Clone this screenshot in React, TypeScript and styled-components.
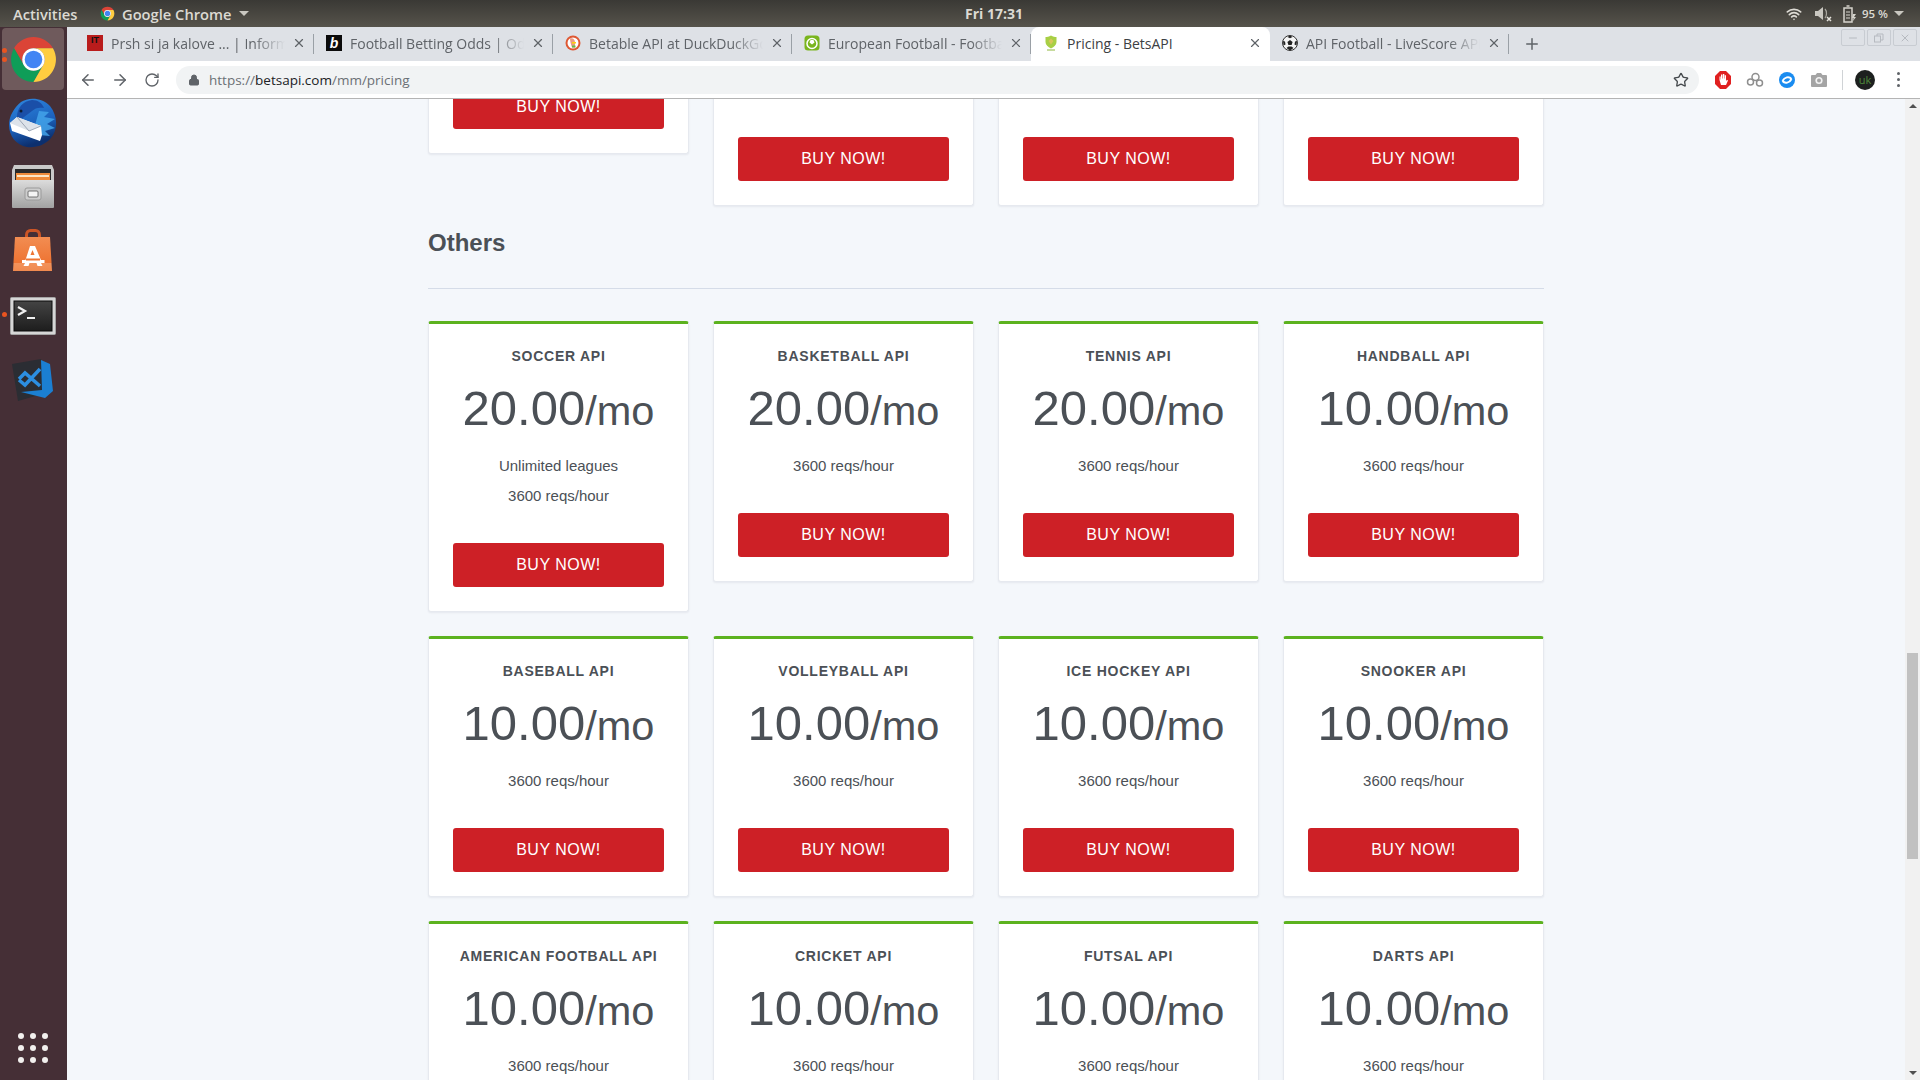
import React from "react";
import styled, { createGlobalStyle } from "styled-components";
import { ArrowLeft, ArrowRight, RotateCw, Lock, Star, Plus, X, Wifi, Minus } from "lucide-react";

const Global = createGlobalStyle`
  html, body { margin: 0; padding: 0; width: 100%; height: 100%; overflow: hidden; }
  * { box-sizing: border-box; }
  #root { width: 1920px; height: 1080px; }
`;

const UI_FONT = `"Open Sans", "Noto Sans", sans-serif`;
const PAGE_FONT = `"Liberation Sans", Arial, sans-serif`;

const Desktop = styled.div`
  width: 1920px;
  height: 1080px;
  display: grid;
  grid-template-rows: 27px 1fr;
  overflow: hidden;
  background: #452f36;
`;

const TopBar = styled.header`
  display: grid;
  grid-template-columns: 952px auto 1fr;
  align-items: center;
  padding: 0 12px 0 13px;
  background: linear-gradient(180deg, #3a3935 0%, #56534b 100%);
  color: #dcdad3;
  font: 600 14.7px ${UI_FONT};
`;

const TopLeft = styled.div`
  display: flex;
  align-items: center;
`;

const Activities = styled.span`
  width: 87px;
`;

const AppName = styled.span`
  margin: 0 7px;
`;

const Clock = styled.span`
  font-size: 14px;
  font-weight: 700;
`;

const TopRight = styled.div`
  display: flex;
  align-items: center;
  justify-content: flex-end;
  padding-right: 4px;
  font-size: 11.5px;
`;

const Tray = styled.span`
  display: flex;
  align-items: center;
  margin-right: ${(p: { $gap: number }) => p.$gap}px;
`;

const Caret = styled.span`
  width: 0;
  height: 0;
  border-left: 5px solid transparent;
  border-right: 5px solid transparent;
  border-top: 5px solid #c9c7c0;
`;

const Workspace = styled.div`
  display: grid;
  grid-template-columns: 67px 1fr;
  min-height: 0;
`;

const Dock = styled.nav`
  display: flex;
  flex-direction: column;
  align-items: center;
  padding: 1px 3px 17px 2px;
  background: #452f36;
`;

const DockTile = styled.div<{ $active?: boolean; $nudge?: number }>`
  position: relative;
  width: 62px;
  height: 62px;
  margin-bottom: 2px;
  padding-top: ${(p) => p.$nudge ?? 0}px;
  border-radius: 4px;
  display: flex;
  align-items: center;
  justify-content: center;
  background: ${(p) => (p.$active ? "#6f5a5c" : "transparent")};
`;

const DockDot = styled.i<{ $top: number }>`
  position: absolute;
  left: 0;
  top: ${(p) => p.$top}px;
  width: 5px;
  height: 5px;
  border-radius: 50%;
  background: #e95420;
`;

const AppGrid = styled.div`
  margin-top: auto;
  display: grid;
  grid-template-columns: repeat(3, 6px);
  gap: 6px;
`;

const AppDot = styled.i`
  width: 6px;
  height: 6px;
  border-radius: 50%;
  background: #f2f0ee;
`;

const Browser = styled.div`
  display: grid;
  grid-template-rows: 34px 38px 1fr;
  min-width: 0;
  min-height: 0;
  background: #fff;
`;

const TabStrip = styled.div`
  display: flex;
  align-items: stretch;
  padding-left: 8px;
  background: #dee1e6;
`;

const Tab = styled.div<{ $active?: boolean }>`
  position: relative;
  width: 239px;
  height: 34px;
  padding: 0 7px 2px 12px;
  display: flex;
  align-items: center;
  border-radius: 8px 8px 0 0;
  background: ${(p) => (p.$active ? "#fff" : "transparent")};
  color: ${(p) => (p.$active ? "#3c4043" : "#5f6368")};
  font: 400 14px ${UI_FONT};
  &::after {
    content: "";
    display: ${(p) => (p.$active ? "none" : "block")};
    position: absolute;
    right: 0;
    top: 7px;
    height: 20px;
    width: 1px;
    background: #9aa0a6;
  }
`;

const Favicon = styled.span`
  flex: none;
  width: 16px;
  height: 16px;
  margin-right: 8px;
  display: flex;
`;

const TabTitle = styled.span<{ $fade?: boolean }>`
  flex: 1;
  min-width: 0;
  overflow: hidden;
  white-space: nowrap;
  mask-image: ${(p) =>
    p.$fade ? "linear-gradient(90deg, #000 82%, transparent 100%)" : "none"};
`;

const TabClose = styled.span`
  flex: none;
  width: 16px;
  margin-left: 6px;
  display: flex;
  justify-content: center;
  color: #5f6368;
`;

const NewTab = styled.span`
  width: 46px;
  display: flex;
  align-items: center;
  justify-content: center;
  color: #5f6368;
`;

const WindowButtons = styled.div`
  margin-left: auto;
  padding: 2px 3px 0 0;
  display: flex;
  gap: 2px;
`;

const WindowButton = styled.span`
  width: 24px;
  height: 17px;
  display: flex;
  align-items: center;
  justify-content: center;
  border: 1px solid #c8ccd2;
  border-radius: 2px;
  color: #b6bac0;
`;

const Toolbar = styled.div`
  display: flex;
  align-items: center;
  padding-left: 5px;
  background: #fff;
  border-bottom: 1px solid #b4b4b4;
`;

const NavButton = styled.span`
  width: 32px;
  display: flex;
  justify-content: center;
  color: #5f6368;
`;

const Omnibox = styled.div`
  width: 1523px;
  height: 28px;
  margin-left: 8px;
  padding: 0 10px 0 12px;
  display: flex;
  align-items: center;
  border-radius: 14px;
  background: #f1f3f4;
  font: 400 13.5px ${UI_FONT};
  color: #6b7075;
`;

const LockSlot = styled.span`
  width: 21px;
  display: flex;
  color: #5f6368;
`;

const UrlHost = styled.span`
  color: #202124;
`;

const StarSlot = styled.span`
  margin-left: auto;
  display: flex;
  color: #45494d;
`;

const ExtSlot = styled.span`
  width: 32px;
  display: flex;
  justify-content: center;
  flex: none;
`;

const ExtRow = styled.div`
  margin-left: 8px;
  display: flex;
  align-items: center;
`;

const ExtDivider = styled.i`
  width: 1px;
  height: 20px;
  margin: 0 12px 0 7px;
  background: #d0d3d6;
`;

const Avatar = styled.span`
  width: 20px;
  height: 20px;
  border-radius: 50%;
  background: #1d201f;
  color: #4e8a3a;
  font: 400 11px ${UI_FONT};
  display: flex;
  align-items: center;
  justify-content: center;
`;

const MenuDots = styled.span`
  margin-left: 22px;
  display: flex;
  flex-direction: column;
  gap: 3px;
  & i {
    width: 3px;
    height: 3px;
    border-radius: 50%;
    background: #5f6368;
  }
`;

const Viewport = styled.div`
  display: grid;
  grid-template-columns: 1fr 15px;
  min-height: 0;
  overflow: hidden;
  background: #f4f7fb;
`;

const Scroller = styled.main`
  overflow: hidden;
  min-width: 0;
`;

const Container = styled.div`
  width: 1116px;
  margin: -30px auto 0;
  font-family: ${PAGE_FONT};
  color: #4b5056;
`;

const CardGrid = styled.section`
  display: grid;
  grid-template-columns: repeat(4, 261px);
  gap: 24px;
  align-items: start;
`;

const Card = styled.article<{ $lead?: number }>`
  padding: ${(p) => (p.$lead !== undefined ? p.$lead : 24)}px 24px 24px;
  background: #fff;
  border: 1px solid #e6e9ef;
  border-top: 3px solid #5cb21f;
  border-radius: 3px;
  box-shadow: 0 1px 2px rgba(60, 70, 90, 0.08);
  text-align: center;
`;

const PlanName = styled.h3`
  margin: 0;
  font-size: 14px;
  line-height: 16px;
  font-weight: 700;
  letter-spacing: 0.75px;
`;

const Price = styled.div`
  margin-top: 15px;
  height: 62px;
  font-size: 49px;
  line-height: 58px;
  white-space: nowrap;
`;

const PriceUnit = styled.span`
  font-size: 41.5px;
`;

const FeatureList = styled.ul`
  list-style: none;
  margin: 10px 0 32px;
  padding: 0;
  font-size: 15px;
  line-height: 30px;
`;

const BuyButton = styled.button`
  display: block;
  width: 100%;
  height: 44px;
  padding: 0;
  border: 0;
  border-radius: 3px;
  background: #cd2026;
  color: #fff;
  font: 400 16px ${PAGE_FONT};
  letter-spacing: 0.5px;
`;

const SectionTitle = styled.h2`
  margin: 23px 0 31px;
  font-size: 24px;
  line-height: 28px;
  font-weight: 700;
`;

const Rule = styled.hr`
  margin: 0 0 32px;
  border: 0;
  height: 1px;
  background: #d5dce8;
`;

const Scrollbar = styled.aside`
  display: flex;
  flex-direction: column;
  align-items: center;
  background: #f1f1f1;
  padding: 5px 0;
`;

const ArrowUp = styled.i`
  width: 0;
  height: 0;
  border-left: 4px solid transparent;
  border-right: 4px solid transparent;
  border-bottom: 4px solid #505050;
`;

const ArrowDown = styled.i`
  width: 0;
  height: 0;
  margin-top: auto;
  border-left: 4px solid transparent;
  border-right: 4px solid transparent;
  border-top: 4px solid #505050;
`;

const Thumb = styled.div`
  width: 11px;
  height: 206px;
  margin-top: 545px;
  background: #c1c1c1;
`;

const ChromeLogo = ({ size }: { size: number }) => (
  <svg width={size} height={size} viewBox="0 0 48 48">
    <path fill="#db4437" d="M43.05 13A22 22 0 0 0 4.95 13L14.47 29.5A11 11 0 0 1 24 13Z" />
    <path fill="#0f9d58" d="M4.95 13A22 22 0 0 0 24 46L33.53 29.5A11 11 0 0 1 14.47 29.5Z" />
    <path fill="#ffcd40" d="M24 46A22 22 0 0 0 43.05 13L24 13A11 11 0 0 1 33.53 29.5Z" />
    <circle cx="24" cy="24" r="11" fill="#fff" />
    <circle cx="24" cy="24" r="8.6" fill="#4285f4" />
  </svg>
);

const Thunderbird = () => (
  <svg width="50" height="50" viewBox="0 0 50 50">
    <defs>
      <linearGradient id="tb" x1="0" y1="0" x2="0.3" y2="1">
        <stop offset="0" stopColor="#2f88e0" />
        <stop offset="0.6" stopColor="#1c62bd" />
        <stop offset="1" stopColor="#0c2f6e" />
      </linearGradient>
    </defs>
    <path fill="url(#tb)" d="M13 4C20-1 34-1 42 8c8 10 8 24 1 32-6 7-15 10-24 9C8 47 1 38 1 27c0-9 5-17 12-23Z" />
    <path fill="#43a3ea" d="M31 13l10 1-5 5 11 2-8 5 8 4-10 3 5 5-11-1-4-10Z" opacity="0.85" />
    <path fill="#1a4fa8" d="M9 19C9 10 15 3 24 2c6 0 10 3 12 8-5-1-9 0-12 3L12 22Z" />
    <circle cx="13" cy="13" r="1.500" fill="#0d1c33" />
    <path fill="#fff" d="M2 25l7-6 24 9 1 9-2 6-28-10Z" />
    <path fill="#dde3ea" d="M9 19l24 9-12 5L2 25Z" />
    <path fill="none" stroke="#8c97a7" strokeWidth="0.800" d="M9 19l12 14 12-5" />
  </svg>
);

const FileCabinet = () => (
  <svg width="42" height="44" viewBox="0 0 42 44">
    <defs>
      <linearGradient id="cab" x1="0" y1="0" x2="0" y2="1">
        <stop offset="0" stopColor="#dcdcdc" />
        <stop offset="1" stopColor="#a2a2a2" />
      </linearGradient>
    </defs>
    <path fill="#c9c9c9" d="M2 0h38l2 5v12H0V5Z" />
    <rect x="3" y="4" width="36" height="13" fill="#2a2a2a" />
    <rect x="4" y="8" width="34" height="8" fill="#ee8b3a" />
    <rect x="5" y="10" width="32" height="2" fill="#fbe5c4" />
    <rect x="0" y="15" width="42" height="28" rx="1" fill="url(#cab)" />
    <rect x="13" y="23" width="16" height="12" rx="2" fill="#cdcdcd" stroke="#9a9a9a" />
    <rect x="16" y="26" width="10" height="6" rx="1" fill="#f4f4f4" stroke="#555" strokeWidth="0.800" />
  </svg>
);

const SoftwareBag = () => (
  <svg width="44" height="44" viewBox="0 0 44 44">
    <defs>
      <linearGradient id="bag" x1="0" y1="0" x2="0" y2="1">
        <stop offset="0" stopColor="#f28d52" />
        <stop offset="0.75" stopColor="#ee7433" />
        <stop offset="0.76" stopColor="#f2935c" />
        <stop offset="1" stopColor="#f08a4f" />
      </linearGradient>
    </defs>
    <path fill="none" stroke="#cc5526" strokeWidth="3" d="M15.500 12V6c0-3 2-4.500 4-4.500h5c2 0 4 1.500 4 4.500v6" />
    <path fill="url(#bag)" d="M4 8h35l2 34H2Z" />
    <path fill="#fff" d="M19 17h5l6 14h3.500v3H30l1.500 3h-5l-1-3h-7l-1 3h-5l1.500-3H11v-3h3.500Z" />
    <path fill="#ee7433" d="M15 29.500h14v2H15Z" />
    <path fill="#ee7433" d="M21.500 21l2 5h-4Z" />
  </svg>
);

const TerminalIcon = () => (
  <svg width="46" height="38" viewBox="0 0 46 38">
    <defs>
      <linearGradient id="term" x1="0" y1="0" x2="0" y2="1">
        <stop offset="0" stopColor="#444" />
        <stop offset="1" stopColor="#1d1d1d" />
      </linearGradient>
    </defs>
    <rect x="0.500" y="0.500" width="45" height="37" rx="1" fill="#d6d6d6" stroke="#a5a5a5" />
    <rect x="4" y="4" width="38" height="30" fill="url(#term)" stroke="#0a0a0a" />
    <path d="M8 10l7 4-7 4" fill="none" stroke="#f0f0f0" strokeWidth="2.200" />
    <path d="M17 21h8" fill="none" stroke="#f0f0f0" strokeWidth="2" />
  </svg>
);

const VSCodeIcon = () => (
  <svg width="42" height="44" viewBox="0 0 42 44">
    <path fill="#2b2d33" d="M0 5 29 0l12 32-35 10Z" />
    <path fill="#1b7fd2" d="M29 1l9 4 3 27-8 7-24-6 21-2Z" />
    <path fill="none" stroke="#2c8fe2" strokeWidth="3.500" d="M28 10 13 26l-6-5M28 27 13 14l-6 6" />
  </svg>
);

const ITFavicon = styled.span`
  width: 16px;
  height: 16px;
  background: #b91c1c;
  color: #111;
  font: 700 9px/10px ${PAGE_FONT};
  text-align: center;
`;

const BFavicon = styled.span`
  width: 16px;
  height: 16px;
  background: #0b0b0b;
  color: #fff;
  font: italic 700 14px/16px ${PAGE_FONT};
  text-align: center;
`;

const DuckIcon = () => (
  <svg width="16" height="16" viewBox="0 0 16 16">
    <circle cx="8" cy="8" r="7.500" fill="#de5833" />
    <circle cx="8" cy="8" r="5.500" fill="#fff" />
    <path fill="#de5833" d="M5 3.500c3-1 5 1 5 4v5H7c-1-3-2-6-2-9Z" opacity=".6" />
    <path fill="#65bc46" d="M7 10.500h3.500v2H7Z" />
    <path fill="#fdd209" d="M7 7h4v1.500H7Z" />
  </svg>
);

const GreenBallIcon = () => (
  <svg width="16" height="16" viewBox="0 0 16 16">
    <rect x="0.500" y="0.500" width="15" height="15" rx="3.500" fill="#7ab51d" />
    <circle cx="8" cy="8.500" r="5" fill="none" stroke="#fff" strokeWidth="1.500" />
    <path fill="#fff" d="M6.500 5h3l1 2.500-2.500 2-2.500-2Z" />
  </svg>
);

const ShieldIcon = () => (
  <svg width="16" height="16" viewBox="0 0 16 16">
    <path fill="#a8cf45" d="M8 .5c2 1.200 4 1.500 5.500 1.500v5c0 3-2.500 5-5.500 6.500C5 12 2.500 10 2.500 7V2C4 2 6 1.700 8 .5Z" />
    <path fill="#d8c65a" d="M8 3.500 10.500 6 8 9.500 5.500 6Z" />
    <path fill="#8fb63a" d="M4 14.500h8v1H4Z" />
  </svg>
);

const BallIcon = () => (
  <svg width="16" height="16" viewBox="0 0 16 16">
    <circle cx="8" cy="8" r="7.500" fill="#f4f4f4" stroke="#333" />
    <path fill="#222" d="M8 5l2.600 1.900-1 3H6.400l-1-3ZM8 .5l2.500 1.500L8 3.200 5.500 2ZM1 6l2 .5.500 3L1.500 10.500ZM15 6l-2 .5-.5 3 2 1ZM4.500 13l2-1.500h3l2 1.500L8 15.500Z" />
  </svg>
);

const AdblockIcon = () => (
  <svg width="16" height="18" viewBox="0 0 16 18">
    <path fill="#e02020" d="M5 0h6l5 5v8l-5 5H5l-5-5V5Z" />
    <path fill="#fff" d="M6 3.500h1.500v4H8V3h1.300v4.500h.4V4.200H11V10l1-1.200 1 .7-2 4.500H6L4.500 9V5.500h1.200v3H6Z" />
  </svg>
);

const ChainIcon = () => (
  <svg width="18" height="16" viewBox="0 0 18 16" fill="none" stroke="#8f8f8f" strokeWidth="1.500">
    <circle cx="4.500" cy="10" r="3" />
    <circle cx="13.500" cy="11" r="3" />
    <circle cx="9.500" cy="5" r="3.500" />
  </svg>
);

const BlueRing = () => (
  <svg width="16" height="16" viewBox="0 0 16 16">
    <circle cx="8" cy="8" r="8" fill="#1a8cf0" />
    <path fill="none" stroke="#fff" strokeWidth="2" d="M3.500 9c2-4 6.500-5 9-2M12.500 7c-2 4-6.500 5-9 2" />
  </svg>
);

const CameraIcon = () => (
  <svg width="16" height="15" viewBox="0 0 16 15">
    <path fill="#a4a4a4" d="M1 3h3.500L6 1h4l1.500 2H15a1 1 0 0 1 1 1v10a1 1 0 0 1-1 1H1a1 1 0 0 1-1-1V4a1 1 0 0 1 1-1Z" />
    <circle cx="8" cy="8.500" r="3.600" fill="#f2f2f2" />
    <circle cx="8" cy="8.500" r="2" fill="#a4a4a4" />
  </svg>
);

const VolumeMuted = () => (
  <svg width="18" height="16" viewBox="0 0 18 16">
    <path fill="#c9c7c0" d="M1 5h3l5-4v13l-5-4H1Z" />
    <path fill="none" stroke="#a9a79f" strokeWidth="1.200" d="M11 3c2 2 2 7 0 9" />
    <path fill="none" stroke="#e6e4dd" strokeWidth="1.500" d="M13 11l4 4M17 11l-4 4" />
  </svg>
);

const Battery = () => (
  <svg width="14" height="18" viewBox="0 0 14 18">
    <path fill="none" stroke="#d6d4cd" strokeWidth="1.500" d="M2 3h8v14H2ZM4.500 1h3" />
    <path fill="none" stroke="#d6d4cd" strokeWidth="1.200" d="M4 7h4M4 10h4M4 13h4" />
    <path fill="#d6d4cd" d="M11 9h3l-2 3h2l-3 4 .5-3H10Z" />
  </svg>
);

const tabs = [
  { title: "Prsh si ja kalove ... | Information Technology", icon: <ITFavicon>IT</ITFavicon> },
  { title: "Football Betting Odds | Odds Comparison", icon: <BFavicon>b</BFavicon> },
  { title: "Betable API at DuckDuckGo Search", icon: <DuckIcon /> },
  { title: "European Football - Football Data", icon: <GreenBallIcon /> },
  { title: "Pricing - BetsAPI", icon: <ShieldIcon />, active: true },
  { title: "API Football - LiveScore API Service", icon: <BallIcon /> },
];

type Plan = { name: string; price: string; features: string[] };

const REQS = "3600 reqs/hour";
const plans: Plan[] = [
  { name: "SOCCER API", price: "20.00", features: ["Unlimited leagues", REQS] },
  { name: "BASKETBALL API", price: "20.00", features: [REQS] },
  { name: "TENNIS API", price: "20.00", features: [REQS] },
  { name: "HANDBALL API", price: "10.00", features: [REQS] },
  { name: "BASEBALL API", price: "10.00", features: [REQS] },
  { name: "VOLLEYBALL API", price: "10.00", features: [REQS] },
  { name: "ICE HOCKEY API", price: "10.00", features: [REQS] },
  { name: "SNOOKER API", price: "10.00", features: [REQS] },
  { name: "AMERICAN FOOTBALL API", price: "10.00", features: [REQS] },
  { name: "CRICKET API", price: "10.00", features: [REQS] },
  { name: "FUTSAL API", price: "10.00", features: [REQS] },
  { name: "DARTS API", price: "10.00", features: [REQS] },
];

const dockApps = [
  { key: "chrome", icon: <ChromeLogo size={49} />, active: true, dots: [20, 29], nudge: 0 },
  { key: "mail", icon: <Thunderbird />, dots: [], nudge: 0 },
  { key: "files", icon: <FileCabinet />, dots: [], nudge: 0 },
  { key: "store", icon: <SoftwareBag />, dots: [], nudge: 0 },
  { key: "term", icon: <TerminalIcon />, dots: [28], nudge: 2 },
  { key: "code", icon: <VSCodeIcon />, dots: [], nudge: 4 },
];

export default function App() {
  return (
    <Desktop>
      <Global />
      <TopBar>
        <TopLeft>
          <Activities>Activities</Activities>
          <ChromeLogo size={15} />
          <AppName>Google Chrome</AppName>
          <Caret />
        </TopLeft>
        <Clock>Fri 17:31</Clock>
        <TopRight>
          <Tray $gap={12}><Wifi size={16} strokeWidth={2.5} /></Tray>
          <Tray $gap={10}><VolumeMuted /></Tray>
          <Tray $gap={6}><Battery /></Tray>
          <Tray $gap={6}>95 %</Tray>
          <Caret />
        </TopRight>
      </TopBar>
      <Workspace>
        <Dock>
          {dockApps.map((app) => (
            <DockTile key={app.key} $active={app.active} $nudge={app.nudge}>
              {app.dots.map((top) => (
                <DockDot key={top} $top={top} />
              ))}
              {app.icon}
            </DockTile>
          ))}
          <AppGrid>
            {Array.from({ length: 9 }, (_, i) => (
              <AppDot key={i} />
            ))}
          </AppGrid>
        </Dock>
        <Browser>
          <TabStrip>
            {tabs.map((tab) => (
              <Tab key={tab.title} $active={tab.active}>
                <Favicon>{tab.icon}</Favicon>
                <TabTitle $fade={!tab.active}>{tab.title}</TabTitle>
                <TabClose><X size={14} /></TabClose>
              </Tab>
            ))}
            <NewTab><Plus size={18} /></NewTab>
            <WindowButtons>
              <WindowButton><Minus size={12} /></WindowButton>
              <WindowButton><svg width="12" height="12" viewBox="0 0 12 12" fill="none" stroke="currentColor"><rect x="1.500" y="4" width="6" height="6" /><path d="M4 4V2h6v6H8" /></svg></WindowButton>
              <WindowButton><X size={12} /></WindowButton>
            </WindowButtons>
          </TabStrip>
          <Toolbar>
            <NavButton><ArrowLeft size={18} /></NavButton>
            <NavButton><ArrowRight size={18} /></NavButton>
            <NavButton><RotateCw size={16} /></NavButton>
            <Omnibox>
              <LockSlot><Lock size={12} fill="currentColor" /></LockSlot>
              https://<UrlHost>betsapi.com</UrlHost>/mm/pricing
              <StarSlot><Star size={16} /></StarSlot>
            </Omnibox>
            <ExtRow>
              <ExtSlot><AdblockIcon /></ExtSlot>
              <ExtSlot><ChainIcon /></ExtSlot>
              <ExtSlot><BlueRing /></ExtSlot>
              <ExtSlot><CameraIcon /></ExtSlot>
              <ExtDivider />
              <Avatar>uk</Avatar>
              <MenuDots><i /><i /><i /></MenuDots>
            </ExtRow>
          </Toolbar>
          <Viewport>
            <Scroller>
              <Container>
                <CardGrid>
                  <Card $lead={13}><BuyButton>BUY NOW!</BuyButton></Card>
                  <Card $lead={65}><BuyButton>BUY NOW!</BuyButton></Card>
                  <Card $lead={65}><BuyButton>BUY NOW!</BuyButton></Card>
                  <Card $lead={65}><BuyButton>BUY NOW!</BuyButton></Card>
                </CardGrid>
                <SectionTitle>Others</SectionTitle>
                <Rule />
                <CardGrid>
                  {plans.map((plan) => (
                    <Card key={plan.name}>
                      <PlanName>{plan.name}</PlanName>
                      <Price>{plan.price}<PriceUnit>/mo</PriceUnit></Price>
                      <FeatureList>
                        {plan.features.map((f) => (
                          <li key={f}>{f}</li>
                        ))}
                      </FeatureList>
                      <BuyButton>BUY NOW!</BuyButton>
                    </Card>
                  ))}
                </CardGrid>
              </Container>
            </Scroller>
            <Scrollbar>
              <ArrowUp />
              <Thumb />
              <ArrowDown />
            </Scrollbar>
          </Viewport>
        </Browser>
      </Workspace>
    </Desktop>
  );
}
